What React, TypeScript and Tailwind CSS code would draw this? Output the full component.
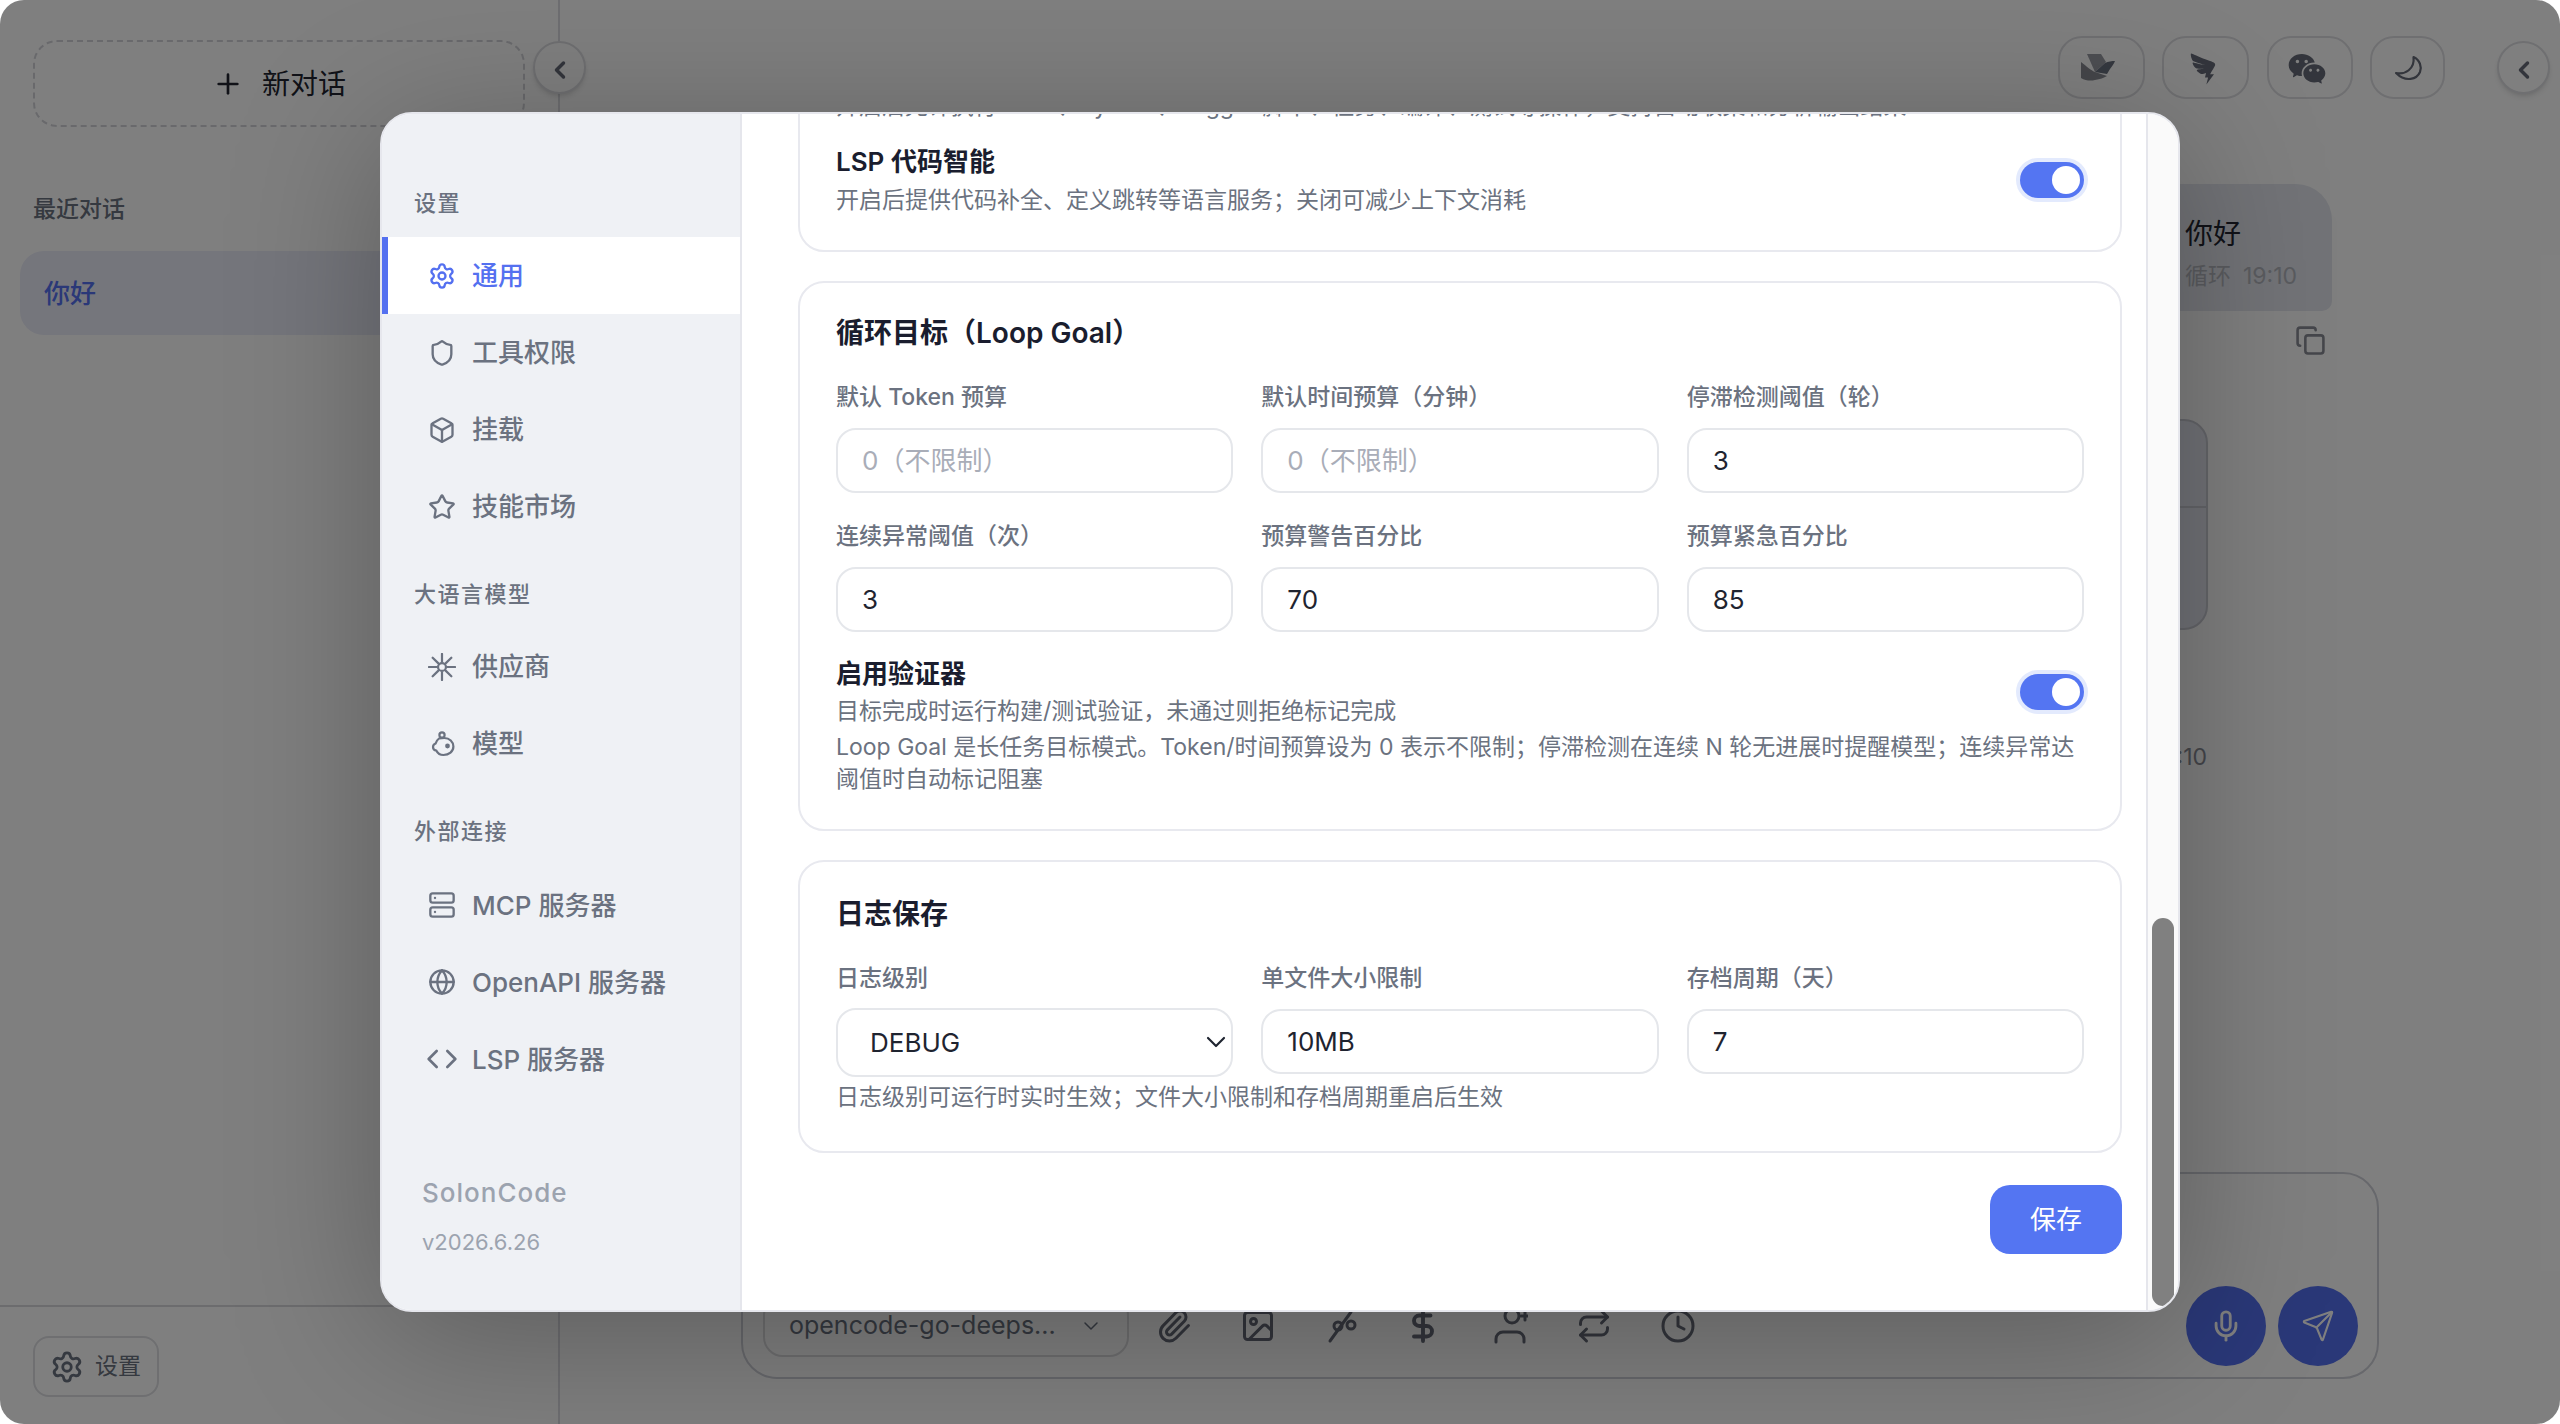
import type { ReactNode } from "react";
import {
  Box,
  ChevronDown,
  ChevronLeft,
  Clock,
  Code,
  Copy,
  DollarSign,
  Globe,
  Image,
  Mic,
  Paperclip,
  Plus,
  Repeat,
  Send,
  Server,
  Settings,
  Shield,
  Star,
} from "lucide-react";
import { AiOutlineDingding } from "react-icons/ai";
import { RiWechatFill } from "react-icons/ri";

const SparkIcon = () => (
  <svg width="28" height="28" viewBox="0 0 24 24" fill="none" stroke="currentColor" strokeWidth="1.9" strokeLinecap="round">
    <circle cx="12" cy="12" r="3.4" />
    <path d="M12 .8v6.6M12 16.6v6.6M.8 12h6.6M16.6 12h6.6M4 4l4.7 4.7M15.3 15.3 20 20M20 4l-4.7 4.7M8.7 15.3 4 20" />
  </svg>
);

const ModelIcon = () => (
  <svg width="28" height="28" viewBox="0 0 28 28" fill="none" stroke="currentColor" strokeWidth="2.2" strokeLinecap="round">
    <circle cx="14" cy="5" r="2.6" />
    <path d="M11 8.5c-1.8 1.4-3 3-3.4 5-1.6.6-2.6 2-2.6 3.6 0 2 1.6 3.4 3.4 3.6 1.4 2.8 3.8 4.3 7 4.3 5.6 0 10-3.4 10-8.4 0-4.6-4-8.600-9-8.600-1.800 0-3.400.2-5.400.5Z" />
    <circle cx="19.500" cy="16" r="1.300" fill="currentColor" />
  </svg>
);

const BirdIcon = () => (
  <svg width="36" height="30" viewBox="0 0 36 30" className="mr-[6px]">
    <path d="M6 0h14l5 8-11 10L6 0Z" fill="#9a9ca4" />
    <path d="M0 8c5 4 11 9 14 10l12 4c-3 2-7 3-12 4-4 1-9 1-14-2V8Z" fill="#8a8d95" />
    <path d="M14 18 24 9c3-1.500 7-2 10-2-1 3-3 5-5 8l-3 5-12-2Z" fill="#6b7280" />
  </svg>
);

const MoonIcon = () => (
  <svg width="36" height="36" viewBox="330 20 36 36" fill="none" stroke="currentColor" strokeWidth="2.2" strokeLinejoin="round">
    <path d="M353.500 26C360 29 362 36 360 41C357 48 346 52 336 42C345 44 355 38 353.500 26Z" />
  </svg>
);

const SlashDotsIcon = () => (
  <svg width="36" height="36" viewBox="0 0 36 36" fill="none" stroke="currentColor" strokeWidth="3" strokeLinecap="round">
    <path d="M27 4 6 33" />
    <circle cx="14" cy="18" r="4" />
    <circle cx="27" cy="17" r="4" />
  </svg>
);

const PersonPlusIcon = () => (
  <svg width="36" height="36" viewBox="0 0 36 36" fill="none" stroke="currentColor" strokeWidth="3" strokeLinecap="round">
    <circle cx="20" cy="8" r="7" />
    <path d="M4 34v-3a7 7 0 0 1 7-7h14a7 7 0 0 1 7 7v3M33 4v8M29 8h8" />
  </svg>
);

const NavSection = ({ label, className }: { label: string; className: string }) => (
  <div className={`h-[32px] pl-[32px] text-[22px] leading-[32px] font-medium tracking-[1.5px] text-[#6b7280] ${className}`}>
    {label}
  </div>
);

const NavItem = ({ icon, label, active }: { icon: ReactNode; label: string; active?: boolean }) => (
  <div
    className={`flex h-[77px] items-center gap-[16px] border-l-[6px] pl-[40px] text-[26px] font-medium ${
      active ? "border-[#5470f0] bg-white text-[#5470f0]" : "border-transparent text-[#6b7280]"
    }`}
  >
    <span className="flex w-[28px] justify-center">{icon}</span>
    {label}
  </div>
);

const Toggle = () => (
  <div className="flex h-[36px] w-[64px] shrink-0 items-center justify-end rounded-full bg-[#5475f2] pr-[4px] ring-4 ring-[#e3eafd]">
    <div className="h-[28px] w-[28px] rounded-full bg-white" />
  </div>
);

const Field = ({ label, value, placeholder }: { label: string; value?: string; placeholder?: string }) => (
  <div className="flex flex-col">
    <label className="mb-[15px] text-[23px] leading-[32px] font-medium text-[#6b7280]">{label}</label>
    <input
      readOnly
      value={value ?? ""}
      placeholder={placeholder}
      className="h-[65px] w-full rounded-[20px] border-2 border-[#e5e7eb] bg-white px-[24px] text-[26px] text-[#1f2430] outline-none placeholder:text-[#a9adb8]"
    />
  </div>
);

const Card = ({ children, className }: { children: ReactNode; className: string }) => (
  <section className={`rounded-[26px] border-2 border-[#e8e9ef] bg-white px-[36px] ${className}`}>{children}</section>
);

const SettingsModal = () => (
  <div className="flex h-[1200px] w-[1800px] overflow-hidden rounded-[32px] border-2 border-[#e6e7ed] bg-white shadow-[0_24px_150px_rgba(0,0,0,0.28)]">
    <aside className="flex w-[360px] shrink-0 flex-col border-r-2 border-[#e5e6ec] bg-[#eff1f5]">
      <NavSection label="设置" className="mt-[73px] mb-[18px]" />
      <NavItem active icon={<Settings size={28} />} label="通用" />
      <NavItem icon={<Shield size={28} />} label="工具权限" />
      <NavItem icon={<Box size={28} />} label="挂载" />
      <NavItem icon={<Star size={28} />} label="技能市场" />
      <NavSection label="大语言模型" className="mt-[33px] mb-[18px]" />
      <NavItem icon={<SparkIcon />} label="供应商" />
      <NavItem icon={<ModelIcon />} label="模型" />
      <NavSection label="外部连接" className="mt-[33px] mb-[19.5px]" />
      <NavItem icon={<Server size={28} />} label="MCP 服务器" />
      <NavItem icon={<Globe size={28} />} label="OpenAPI 服务器" />
      <NavItem icon={<Code size={32} className="shrink-0" />} label="LSP 服务器" />
      <div className="mt-auto pb-[52px] pl-[40px] text-[#9ca3af]">
        <div className="text-[26px] leading-[36px] font-medium tracking-[1px]">SolonCode</div>
        <div className="mt-[15px] text-[22px] leading-[32px]">v2026.6.26</div>
      </div>
    </aside>

    <main className="flex min-w-0 flex-1 flex-col justify-end overflow-hidden pr-[24px] pb-[56px] pl-[56px]">
      <Card className="shrink-0 pb-[34px]">
        <p className="mb-[22px] whitespace-nowrap text-[23px] leading-[32px] text-[#6b7280]">
          开启后允许执行 Shell、Python、Logger 脚本、任务、编译、测试等操作，支持自动收集和分析输出结果
        </p>
        <div className="flex items-center justify-between">
          <div>
            <h3 className="text-[26px] leading-[36px] font-semibold text-[#1a1d2e]">LSP 代码智能</h3>
            <p className="mt-[4px] text-[23px] leading-[32px] text-[#6b7280]">
              开启后提供代码补全、定义跳转等语言服务；关闭可减少上下文消耗
            </p>
          </div>
          <Toggle />
        </div>
      </Card>

      <Card className="mt-[29px] shrink-0 pt-[32px] pb-[34px]">
        <h2 className="text-[28px] leading-[36px] font-semibold text-[#1a1d2e]">循环目标（Loop Goal）</h2>
        <div className="mt-[30px] grid grid-cols-3 gap-x-[28px] gap-y-[27px]">
          <Field label="默认 Token 预算" placeholder="0（不限制）" />
          <Field label="默认时间预算（分钟）" placeholder="0（不限制）" />
          <Field label="停滞检测阈值（轮）" value="3" />
          <Field label="连续异常阈值（次）" value="3" />
          <Field label="预算警告百分比" value="70" />
          <Field label="预算紧急百分比" value="85" />
        </div>
        <div className="mt-[24px] flex items-center justify-between">
          <div>
            <h3 className="text-[26px] leading-[36px] font-semibold text-[#1a1d2e]">启用验证器</h3>
            <p className="mt-[3px] text-[23px] leading-[32px] text-[#6b7280]">
              目标完成时运行构建/测试验证，未通过则拒绝标记完成
            </p>
          </div>
          <Toggle />
        </div>
        <p className="mt-[4px] text-[23px] leading-[32px] text-[#6b7280]">
          Loop Goal 是长任务目标模式。Token/时间预算设为 0 表示不限制；停滞检测在连续 N 轮无进展时提醒模型；连续异常达阈值时自动标记阻塞
        </p>
      </Card>

      <Card className="mt-[29px] shrink-0 pt-[34px] pb-[38px]">
        <h2 className="text-[28px] leading-[36px] font-semibold text-[#1a1d2e]">日志保存</h2>
        <div className="mt-[30px] grid grid-cols-3 items-start gap-x-[28px]">
          <div className="flex flex-col">
            <label className="mb-[14px] text-[23px] leading-[32px] font-medium text-[#6b7280]">日志级别</label>
            <div className="relative">
              <select className="h-[69px] w-full appearance-none rounded-[20px] border-2 border-[#e5e7eb] bg-white pl-[32px] text-[26px] text-[#1f2430] outline-none">
                <option>DEBUG</option>
              </select>
              <ChevronDown size={32} strokeWidth={1.6} className="absolute top-[18px] right-[1px] text-[#1f2430]" />
            </div>
          </div>
          <Field label="单文件大小限制" value="10MB" />
          <Field label="存档周期（天）" value="7" />
        </div>
        <p className="mt-[4px] text-[23px] leading-[32px] text-[#6b7280]">
          日志级别可运行时实时生效；文件大小限制和存档周期重启后生效
        </p>
      </Card>

      <button className="mt-[32px] h-[69px] w-[132px] shrink-0 self-end rounded-[20px] bg-[#5475f2] text-[26px] text-white">
        保存
      </button>
    </main>

    <div className="flex w-[32px] shrink-0 flex-col justify-end border-l-2 border-[#e5e6ec] bg-[#fafafa] pb-[4px] pl-[4px]">
      <div className="h-[388px] w-[22px] rounded-full bg-[#808080]" />
    </div>
  </div>
);

const HeaderButton = ({ children, className }: { children: ReactNode; className: string }) => (
  <button className={`flex h-[63px] items-center justify-center rounded-[24px] border-2 border-[#dedfe3] pt-[2px] text-[#666b78] ${className}`}>
    {children}
  </button>
);

const App = () => {
  return (
    <div className="relative flex h-[1424px] w-[2560px] overflow-hidden rounded-[24px] bg-white font-[Inter,'Noto_Sans_CJK_SC',sans-serif]">
      <aside className="flex w-[560px] shrink-0 flex-col border-r-2 border-[#dcdde2]">
        <button className="mx-[33px] mt-[40px] flex h-[87px] w-[492px] items-center justify-center gap-[18px] rounded-[24px] border-2 border-dashed border-[#d2d3d8] pt-[1px] text-[28px] text-[#222530]">
          <Plus size={32} strokeWidth={2} />
          新对话
        </button>
        <div className="mt-[66px] pl-[33px] text-[23px] leading-[32px] font-medium text-[#6b7280]">最近对话</div>
        <div className="mx-[20px] mt-[26px] flex h-[84px] items-center rounded-[24px] bg-[#eaecf8] pl-[24px] text-[26px] font-medium text-[#5470f0]">
          你好
        </div>
        <div className="mt-auto h-[119px] border-t-2 border-[#d8d9dd] pt-[29px] pl-[33px]">
          <button className="flex h-[61px] w-[126px] items-center gap-[11px] rounded-[16px] border-2 border-[#dedfe3] pl-[15px] text-[23px] text-[#6b7280]">
            <Settings size={34} />
            设置
          </button>
        </div>
      </aside>

      <button className="absolute top-[41px] left-[533px] flex h-[53px] w-[53px] items-center justify-center rounded-full border-2 border-[#dedfe3] bg-white pt-[4px] text-[#666b78] shadow-md">
        <ChevronLeft size={28} strokeWidth={3} />
      </button>

      <div className="flex min-w-0 flex-1 flex-col items-end">
        <header className="mt-[36px] flex h-[63px] items-center pr-[10px]">
          <HeaderButton className="w-[87px]">
            <BirdIcon />
          </HeaderButton>
          <HeaderButton className="ml-[17px] w-[87px]">
            <AiOutlineDingding size={38} className="mr-[6px]" />
          </HeaderButton>
          <HeaderButton className="ml-[18px] w-[86px]">
            <RiWechatFill size={40} className="mr-[6px]" />
          </HeaderButton>
          <HeaderButton className="ml-[17px] w-[75px]">
            <MoonIcon />
          </HeaderButton>
          <button className="ml-[52px] flex h-[53px] w-[53px] items-center justify-center rounded-full border-2 border-[#dedfe3] bg-white pt-[4px] text-[#666b78] shadow-md">
            <ChevronLeft size={28} strokeWidth={3} />
          </button>
        </header>

        <div className="mt-[85px] mr-[228px] h-[127px] w-[190px] rounded-[36px] rounded-br-[10px] bg-[#e4e7ee] pt-[32px] pl-[43px]">
          <div className="text-[28px] leading-[36px] text-[#222530]">你好</div>
          <div className="mt-[8px] flex gap-[12px] whitespace-nowrap text-[23px] leading-[32px] text-[#b4b7bf]">
            <span>循环</span>
            <span>19:10</span>
          </div>
        </div>
        <Copy size={31} className="mt-[14px] mr-[234px] text-[#8a8d96]" />

        <div className="mt-[63px] mr-[352px] h-[211px] w-[300px] rounded-[24px] border-2 border-[#c9cad3] bg-[#e2e4ee]">
          <div className="h-[87px] border-b-2 border-[#c9cad3]" />
        </div>
        <div className="mt-[111px] mr-[353px] text-[23px] leading-[32px] text-[#8a8d96]">19:10</div>

        <div className="mt-auto mr-[181px] mb-[45px] flex h-[207px] w-[1638px] flex-col justify-end rounded-[36px] border-2 border-[#cfd0d8] pr-[19px] pb-[11px] pl-[20px]">
          <div className="flex h-[80px] items-center">
            <div className="flex h-[62px] w-[366px] items-center rounded-[20px] border-2 border-[#dcdcdf] pl-[24px] text-[25px] text-[#6b7280]">
              <span>opencode-go-deeps...</span>
              <ChevronDown size={24} strokeWidth={1.5} className="mr-[24px] ml-auto" />
            </div>
            <div className="ml-[27px] flex items-center gap-[48px] text-[#666b78]">
              <Paperclip size={36} />
              <Image size={36} />
              <SlashDotsIcon />
              <DollarSign size={36} strokeWidth={2.6} className="-mx-[3px]" />
              <span className="ml-[6px]">
                <PersonPlusIcon />
              </span>
              <Repeat size={36} />
              <Clock size={36} />
            </div>
            <button className="ml-auto flex h-[80px] w-[80px] items-center justify-center rounded-full bg-[#5470f0] text-white">
              <Mic size={34} />
            </button>
            <button className="ml-[12px] flex h-[80px] w-[80px] items-center justify-center rounded-full bg-[#5470f0] text-white">
              <Send size={34} strokeWidth={1.5} />
            </button>
          </div>
        </div>
      </div>

      {/* dialog over the dimmed page */}
      <div className="absolute inset-0 flex items-center justify-center bg-black/50">
        <SettingsModal />
      </div>
    </div>
  );
};

export default App;
